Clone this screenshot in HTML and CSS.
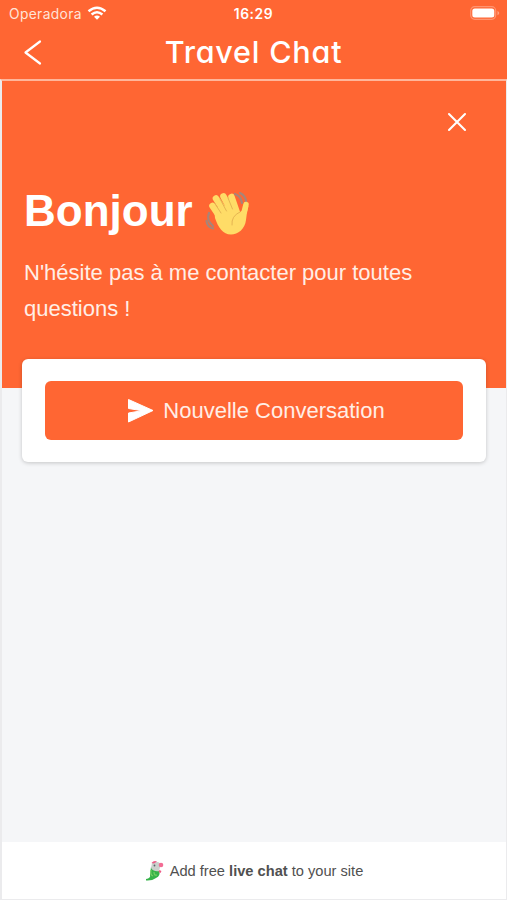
FILE: index.html
```html
<!DOCTYPE html>
<html lang="fr">
<head>
<meta charset="utf-8">
<title>Travel Chat</title>
<link rel="stylesheet" href="styles.css">
</head>
<body>
<header class="app-header">
  <div class="status">
    <div class="carrier"><span>Operadora</span>
      <svg class="wifi" width="20" height="15" viewBox="0 0 20 15"><g fill="none" stroke="#fff" stroke-width="2.5"><path d="M1.500 5.200Q10-1.800 18.500 5.200"/><path d="M4.600 8.500Q10 4 15.400 8.500"/></g><path d="M7 10.700Q10 8.500 13 10.700L10 13.700Z" fill="#fff"/></svg>
    </div>
    <time>16:29</time>
    <svg class="battery" width="31" height="15" viewBox="0 0 31 15"><rect x=".7" y=".7" width="25" height="12.600" rx="4" fill="none" stroke="#fff" stroke-opacity=".3" stroke-width="1.200"/><rect x="2.300" y="2.500" width="22" height="9" rx="2.500" fill="#fff"/><path d="M27.500 4.700Q31 7 27.500 9.300Z" fill="#fff" fill-opacity=".4"/></svg>
  </div>
  <div class="nav">
    <svg class="back" width="20" height="28" viewBox="0 0 20 28"><path d="M17 2.500 2.500 13.500 17 24.500" fill="none" stroke="#fff" stroke-width="2.200" stroke-linecap="round" stroke-linejoin="round"/></svg>
    <h1>Travel Chat</h1>
  </div>
</header>
<main class="widget">
  <section class="hero">
    <svg class="close" width="20" height="20" viewBox="0 0 20 20"><path d="M2 2 18 18M18 2 2 18" stroke="#fff" stroke-width="2.100" stroke-linecap="round"/></svg>
    <h2><span>Bonjour</span>
      <svg class="wave" width="48" height="48" viewBox="0 0 48 48">
        <g fill="none" stroke="#a88478" stroke-width="2.200" stroke-linecap="round"><path d="M31 5Q37 7 38 14M36 4Q42 7 42 13M5 24Q2 31 9 37M2.500 32Q3 38 9 39.500"/></g>
        <g stroke="#ffdc67" stroke-width="6.600" stroke-linecap="round" fill="none"><path d="M8.500 17 18 31M12 9.500 24 28M19.500 7.500 29 25M27.500 8 33 24"/><path d="M42 15.500Q40.500 24 37 30" stroke-width="5.500"/></g>
        <path d="M10 19 31 15Q34 20 35.500 23.500L44.500 17Q42.500 25 42 31C41 40 34 45.500 27 45.500C19 45.500 14 38 11 29Z" fill="#ffdc67"/>
        <g fill="none" stroke="#e5b552" stroke-width="1" stroke-linecap="round"><path d="M10.500 14 17 24M16 10 22.500 22M24 9 28.500 20M36 23Q27 27 28 36"/></g>
      </svg>
    </h2>
    <p>N'hésite pas à me contacter pour toutes questions !</p>
  </section>
  <section class="card">
    <button class="start" type="button">
      <svg width="27" height="24" viewBox="0 0 27 24"><path d="M1.500.5 26 11.500 1.500 23V14L15 11.700 1.500 9.500Z" fill="#fff" stroke="#fff" stroke-linejoin="round"/></svg>
      <span>Nouvelle Conversation</span>
    </button>
  </section>
  <footer>
    <svg width="20" height="22" viewBox="0 0 20 22"><path d="M6 7 14 10Q16 16 11 18Q7 21 1 20.500L1 19Q6 18 5 15Z" fill="#36b34a"/><path d="M6 10Q5 15 8 16M9 12Q9 16 12 15" fill="none" stroke="#74cf61" stroke-width="1.200"/><path d="M7 3Q12 0 16 4L14 11Q9 12 6 8Z" fill="#ccd0cd"/><path d="M6.500 3Q9 0 12 1.500L9 3.500Z" fill="#ed5c87"/><circle cx="16" cy="5" r="2.300" fill="#f36c94"/><path d="M14 11 16 12" stroke="#ed5c87" stroke-width="2"/><circle cx="9.500" cy="5.500" r=".9" fill="#59636b"/></svg>
    <span>Add free <b>live chat</b> to your site</span>
  </footer>
</main>
</body>
</html>
```
FILE: styles.css
```css
* { box-sizing: border-box; }
body {
  margin: 0;
  height: 900px;
  display: flex;
  flex-direction: column;
  background: #fff;
  color: #fff;
  font-family: "Liberation Sans", Arial, sans-serif;
}
h1, h2, p { margin: 0; }
svg { display: block; flex: none; }
.app-header { height: 79px; background: #ff6633; font-family: Inter, sans-serif; }
.status {
  height: 27px;
  padding: 0 6px 0 9px;
  display: grid;
  grid-template-columns: 1fr auto 1fr;
  align-items: center;
  font-size: 13.8px;
}
.carrier { display: flex; align-items: center; gap: 5px; color: #ffe3d7; letter-spacing: .36px; }
.status time { margin-right: 3px; font-weight: 600; letter-spacing: .6px; }
.battery { justify-self: end; }
.nav {
  height: 51px;
  padding: 0 23px;
  display: grid;
  grid-template-columns: 20px 1fr 20px;
  align-items: center;
}
h1 {
  text-align: center;
  font-size: 30.5px;
  line-height: 40px;
  font-weight: 500;
  font-feature-settings: "cv11" 1;
  letter-spacing: .8px;
}
.nav h1 { margin-top: -2px; }
.widget {
  flex: 1;
  display: flex;
  flex-direction: column;
  border: 2px solid #ebebed;
  border-top-color: #ffb69b;
  border-right-width: 1px;
  border-bottom-width: 1px;
  background: #f5f6f8;
}
.hero { height: 307px; padding: 31px 39px 0 22px; background: #ff6633; }
.close { margin-left: auto; }
.hero h2 {
  height: 50px;
  margin-top: 54px;
  display: flex;
  align-items: center;
  gap: 11px;
  font-size: 44px;
  line-height: 50px;
}
.hero p { margin-top: 19px; font-size: 22px; line-height: 35.6px; color: #ffeee6; }
.wave { margin-top: 3px; }
.card {
  height: 103px;
  margin: -29px 20px 0;
  padding: 22px 23px 22px 23px;
  border-radius: 6px;
  background: #fff;
  box-shadow: 0 1px 4px rgba(0, 0, 0, .2);
}
.start {
  width: 100%;
  height: 59px;
  padding: 0 0 0 4px;
  border: 0;
  border-radius: 6px;
  display: flex;
  align-items: center;
  justify-content: center;
  gap: 9px;
  background: #ff6633;
  color: #ffeee6;
  font: 22px "Liberation Sans", Arial, sans-serif;
}
footer {
  height: 57px;
  margin-top: auto;
  display: flex;
  align-items: center;
  justify-content: center;
  gap: 5px;
  background: #fff;
  color: #505050;
  font-size: 14.65px;
}
```
